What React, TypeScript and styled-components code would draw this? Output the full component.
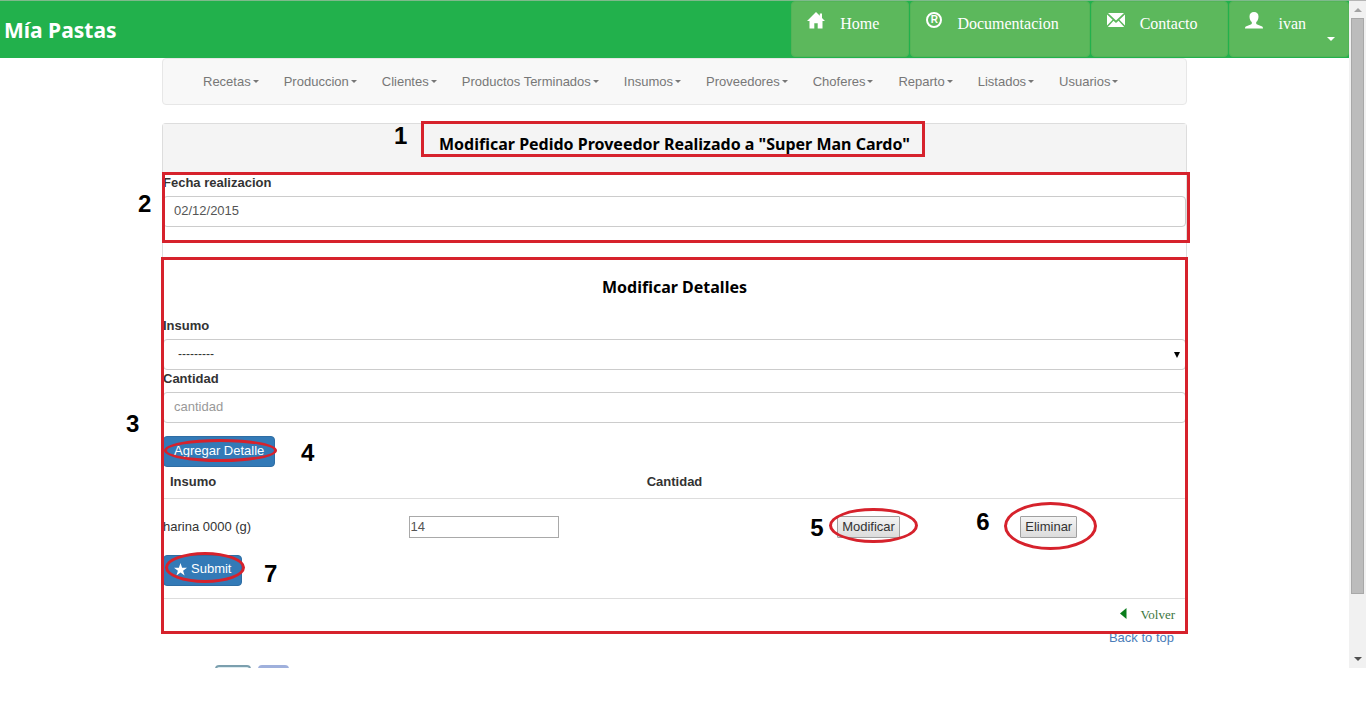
import React from "react";
import styled, { createGlobalStyle } from "styled-components";

const sans = `"Liberation Sans", Arial, sans-serif`;
const serif = `"Liberation Serif", "Times New Roman", serif`;
const humanist = `Tahoma, "Noto Sans", "Open Sans", sans-serif`;

const GlobalStyle = createGlobalStyle`
  *, *::before, *::after { box-sizing: border-box; }
  body {
    margin: 0;
    background: #fff;
    color: #333;
    font-family: ${sans};
    font-size: 13px;
    line-height: 16px;
  }
  a { text-decoration: none; }
  button, input, select { font: inherit; }
`;

const Screen = styled.div`
  display: flex;
`;

const Page = styled.div`
  flex: 1;
  min-width: 0;
`;

const Header = styled.header`
  display: flex;
  justify-content: space-between;
  align-items: stretch;
  min-height: 58px;
  border-top: 1px solid #7fb98c;
  background: #22b14c;
`;

const Brand = styled.a`
  align-self: center;
  padding-left: 4px;
  color: #fff;
  font-family: ${humanist};
  font-size: 21px;
  line-height: 28px;
  font-weight: 700;
`;

const HeaderLinks = styled.nav`
  display: flex;
  gap: 1px;
  padding-bottom: 1px;
`;

const HeaderLink = styled.a<{ $end: number }>`
  display: flex;
  align-items: flex-start;
  gap: 15px;
  padding: 10px ${(p) => p.$end}px 8px 15px;
  border: 1px solid #53b457;
  border-radius: 4px;
  background: #5cb85c;
  color: #fff;
  font-family: ${serif};
  font-size: 16px;
  line-height: 24px;
  svg { flex: none; }
`;

const Registered = styled.span`
  display: flex;
  align-items: center;
  justify-content: center;
  width: 16px;
  height: 16px;
  border: 2px solid #fff;
  border-radius: 50%;
  font-family: ${sans};
  font-size: 10px;
  line-height: 12px;
  font-weight: 700;
`;

const Caret = styled.span<{ $size: number }>`
  border: ${(p) => p.$size}px solid transparent;
  border-top-color: currentColor;
  border-bottom: 0;
`;

const UserCaret = styled(Caret)`
  align-self: flex-end;
  margin: 0 0 7px 6px;
`;

const Container = styled.div`
  max-width: 1025px;
  margin: 0 auto;
`;

const Menu = styled.nav`
  display: flex;
  flex-wrap: wrap;
  gap: 0 25px;
  padding: 0 40px;
  margin-bottom: 18px;
  border: 1px solid #e7e7e7;
  border-radius: 4px;
  background: #f8f8f8;
`;

const MenuLink = styled.a`
  display: flex;
  align-items: center;
  gap: 2px;
  color: #777;
  line-height: 45px;
`;

const Panel = styled.main`
  border: 1px solid #ddd;
  border-bottom: 0;
  border-radius: 4px 4px 0 0;
`;

const PanelHeading = styled.div`
  display: flex;
  justify-content: center;
  padding: 10px 0 18px;
  background: #f4f4f4;
`;

const Title = styled.h1`
  position: relative;
  margin: 0;
  color: #000;
  font-family: ${humanist};
  font-size: 16px;
  line-height: 20px;
  font-weight: 700;
  text-align: center;
`;

const DateSection = styled.section`
  position: relative;
  padding: 2px 0 16px;
  margin-bottom: 14px;
`;

const DetailsSection = styled.section`
  position: relative;
  padding-top: 20px;
`;

const DetailsTitle = styled(Title)`
  margin-bottom: 20px;
`;

const Label = styled.label`
  display: block;
  margin-bottom: 4px;
  line-height: 18px;
  font-weight: 700;
`;

const Field = styled.input`
  display: block;
  width: 100%;
  height: 31px;
  padding: 0 10px 2px;
  border: 1px solid #ccc;
  border-radius: 4px;
  background: #fff;
  color: #555;
  &::placeholder { color: #999; opacity: 1; }
`;

const SelectBox = styled.div`
  display: grid;
  align-items: center;
  > * { grid-area: 1 / 1; }
  svg { justify-self: end; margin-right: 6px; pointer-events: none; }
`;

const Select = styled.select`
  width: 100%;
  height: 31px;
  padding: 0 14px 2px;
  border: 1px solid #ccc;
  border-radius: 4px;
  background: #fff;
  color: #333;
  font-size: 12px;
  appearance: none;
`;

const Marked = styled.div`
  position: relative;
  width: fit-content;
`;

const AddRow = styled(Marked)`
  margin-top: 13px;
`;

const PrimaryButton = styled.button`
  display: flex;
  align-items: center;
  gap: 4px;
  height: 31px;
  padding: 0 10px 2px;
  border: 1px solid #2e6da4;
  border-radius: 4px;
  background: #337ab7;
  color: #fff;
`;

const Table = styled.table`
  width: 100%;
  table-layout: fixed;
  border-collapse: collapse;
  th {
    padding: 7px 7px 8px;
    border-bottom: 1px solid #ddd;
    text-align: left;
  }
  td {
    height: 56px;
    padding: 0;
    vertical-align: middle;
  }
`;

const Quantity = styled.input`
  display: block;
  width: 150px;
  height: 22px;
  padding: 0 1px;
  border: 1px solid #a9a9a9;
  background: #fff;
  color: #555;
`;

const PlainButton = styled.button`
  display: block;
  height: 22px;
  padding: 0 4px;
  border: 1px solid #a0a0a0;
  border-radius: 1px;
  background: linear-gradient(#f4f4f4, #dcdcdc);
  color: #333;
`;

const PanelFooter = styled.div`
  display: flex;
  justify-content: flex-end;
  padding: 8px 11px 6px;
  margin-top: 12px;
  border-top: 1px solid #ddd;
`;

const BackLink = styled.a`
  display: flex;
  gap: 14px;
  color: #3c763d;
  font-family: ${serif};
  svg { margin-top: 1px; }
`;

const TopRow = styled.div`
  display: flex;
  justify-content: flex-end;
  padding: 1px 13px 19px;
  a { color: #4a7cb8; }
`;

const Badges = styled.div`
  display: flex;
  gap: 7px;
  height: 3px;
  padding-left: 53px;
  overflow: hidden;
`;

const Badge = styled.div<{ $width: number; $line: string; $fill: string }>`
  width: ${(p) => p.$width}px;
  height: 16px;
  border: 2px solid ${(p) => p.$line};
  border-radius: 4px;
  background: ${(p) => p.$fill};
`;

/* Red outlines and numbers that sit over the form they explain. */
const Outline = styled.span<{ $inset: string; $round?: boolean }>`
  position: absolute;
  inset: ${(p) => p.$inset};
  border: 3px solid #d6222c;
  border-radius: ${(p) => (p.$round ? "50%" : "0")};
  pointer-events: none;
`;

const Step = styled.span<{ $left: number; $top: number }>`
  position: absolute;
  left: ${(p) => p.$left}px;
  top: ${(p) => p.$top}px;
  color: #000;
  font-family: ${sans};
  font-size: 24px;
  line-height: 24px;
  font-weight: 700;
`;

const Scrollbar = styled.div`
  display: flex;
  flex-direction: column;
  align-items: center;
  width: 17px;
  border-top: 1px solid #b5b5b5;
  background: #f1f1f1;
`;

const ScrollArrow = styled.div`
  display: flex;
  align-items: center;
  justify-content: center;
  height: 17px;
`;

const Track = styled.div`
  flex: 1;
  display: grid;
  grid-template-rows: 91fr 9fr;
`;

const Thumb = styled.div`
  width: 13px;
  border: 1px solid #a8a8a8;
  background: #bcbcbc;
`;

const menuItems = [
  "Recetas", "Produccion", "Clientes", "Productos Terminados", "Insumos",
  "Proveedores", "Choferes", "Reparto", "Listados", "Usuarios",
];

const HomeIcon = () => (
  <svg width="18" height="17" viewBox="0 0 18 17" fill="#fff" aria-hidden="true">
    <path d="M9 0L0 9h2.5v7.5h4.8v-5.2h3.4v5.2h4.8V9H18l-3-3V1.5h-2.2v2.3z" />
  </svg>
);

const MailIcon = () => (
  <svg width="18" height="16" viewBox="0 0 18 16" fill="#fff" aria-hidden="true">
    <path d="M1 1h16L9 8.600zM0 2.400l5.600 5.400L0 13.400zM18 2.400l-5.600 5.400L18 13.400zM6.500 8.700L9 11l2.500-2.300L17.200 15H.8z" />
  </svg>
);

const UserIcon = () => (
  <svg width="18" height="17" viewBox="0 0 18 17" fill="#fff" aria-hidden="true">
    <path d="M9 0C6.200 0 4.500 1.800 4.500 4.400c0 2.400.9 4.600 2.300 5.700v1.200c0 .7-.3 1-1 1.300L1.400 14.200C.5 14.600 0 15.300 0 16.500h18c0-1.200-.5-1.900-1.400-2.300l-4.400-1.600c-.7-.3-1-.6-1-1.300v-1.200c1.400-1.100 2.300-3.300 2.300-5.700C13.500 1.800 11.800 0 9 0z" />
  </svg>
);

const StarIcon = () => (
  <svg width="13" height="13" viewBox="0 0 13 13" fill="#fff" aria-hidden="true">
    <path d="M6.500 0l1.600 4.700H13L9.100 7.700l1.500 4.800-4.100-2.900-4.100 2.900 1.500-4.800L0 4.700h4.900z" />
  </svg>
);

export default function App() {
  return (
    <>
      <GlobalStyle />
      <Screen>
        <Page>
          <Header>
            <Brand href="#">Mía Pastas</Brand>
            <HeaderLinks>
              <HeaderLink href="#" $end={29}><HomeIcon />Home</HeaderLink>
              <HeaderLink href="#" $end={30}><Registered>R</Registered>Documentacion</HeaderLink>
              <HeaderLink href="#" $end={30}><MailIcon />Contacto</HeaderLink>
              <HeaderLink href="#" $end={13}>
                <UserIcon />ivan<UserCaret $size={4} />
              </HeaderLink>
            </HeaderLinks>
          </Header>
          <Container>
            <Menu>
              {menuItems.map((item) => (
                <MenuLink href="#" key={item}>{item}<Caret $size={3} /></MenuLink>
              ))}
            </Menu>
            <Panel>
              <PanelHeading>
                <Title>
                  Modificar Pedido Proveedor Realizado a "Super Man Cardo"
                  <Outline $inset="-13px -15px -3px -18px" />
                  <Step $left={-45} $top={-10}>1</Step>
                </Title>
              </PanelHeading>
              <DateSection>
                <Label htmlFor="fecha">Fecha realizacion</Label>
                <Field id="fecha" type="text" defaultValue="02/12/2015" />
                <Outline $inset="0 -4px 0 -1px" />
                <Step $left={-25} $top={20}>2</Step>
              </DateSection>
              <DetailsSection>
                <DetailsTitle as="h2">Modificar Detalles</DetailsTitle>
                <Label htmlFor="insumo">Insumo</Label>
                <SelectBox>
                  <Select id="insumo"><option>---------</option></Select>
                  <svg width="6" height="6" viewBox="0 0 6 6" aria-hidden="true">
                    <path d="M0 0h6L3 6z" fill="#000" />
                  </svg>
                </SelectBox>
                <Label htmlFor="cantidad">Cantidad</Label>
                <Field id="cantidad" type="text" placeholder="cantidad" />
                <AddRow>
                  <PrimaryButton type="button">Agregar Detalle</PrimaryButton>
                  <Outline $round $inset="3px -2px 5px 1px" />
                  <Step $left={138} $top={5}>4</Step>
                </AddRow>
                <Table>
                  <colgroup>
                    <col style={{ width: "24%" }} />
                    <col style={{ width: "22.6%" }} />
                    <col style={{ width: "19.3%" }} />
                    <col style={{ width: "17.9%" }} />
                    <col />
                  </colgroup>
                  <thead>
                    <tr>
                      <th colSpan={2}>Insumo</th>
                      <th colSpan={3}>Cantidad</th>
                    </tr>
                  </thead>
                  <tbody>
                    <tr>
                      <td>harina 0000 (g)</td>
                      <td colSpan={2}><Quantity type="text" aria-label="Cantidad de harina" defaultValue="14" /></td>
                      <td>
                        <Marked>
                          <PlainButton type="button">Modificar</PlainButton>
                          <Outline $round $inset="-8px -18px -5px -8px" />
                          <Step $left={-27} $top={0}>5</Step>
                        </Marked>
                      </td>
                      <td>
                        <Marked>
                          <PlainButton type="button">Eliminar</PlainButton>
                          <Outline $round $inset="-14px -20px -12px -16px" />
                          <Step $left={-44} $top={-6}>6</Step>
                        </Marked>
                      </td>
                    </tr>
                  </tbody>
                </Table>
                <Marked>
                  <PrimaryButton type="submit"><StarIcon />Submit</PrimaryButton>
                  <Outline $round $inset="-3px -3px 3px 2px" />
                  <Step $left={101} $top={7}>7</Step>
                </Marked>
                <PanelFooter>
                  <BackLink href="#">
                    <svg width="7" height="11" viewBox="0 0 7 11" aria-hidden="true">
                      <path d="M6.500 0v11L0 5.500z" fill="#0a7d1c" />
                    </svg>
                    Volver
                  </BackLink>
                </PanelFooter>
                <Outline $inset="0 -2px -5px -2px" />
                <Step $left={-37} $top={155}>3</Step>
              </DetailsSection>
            </Panel>
            <TopRow><a href="#">Back to top</a></TopRow>
            <Badges>
              <Badge $width={36} $line="#7b9fae" $fill="#dcebf0" />
              <Badge $width={31} $line="#9fb0dc" $fill="#9fb0dc" />
            </Badges>
          </Container>
        </Page>
        <Scrollbar>
          <ScrollArrow>
            <svg width="8" height="4" viewBox="0 0 8 4" aria-hidden="true"><path d="M0 4h8L4 0z" fill="#a3a3a3" /></svg>
          </ScrollArrow>
          <Track><Thumb /></Track>
          <ScrollArrow>
            <svg width="8" height="4" viewBox="0 0 8 4" aria-hidden="true"><path d="M0 0h8L4 4z" fill="#505050" /></svg>
          </ScrollArrow>
        </Scrollbar>
      </Screen>
    </>
  );
}
